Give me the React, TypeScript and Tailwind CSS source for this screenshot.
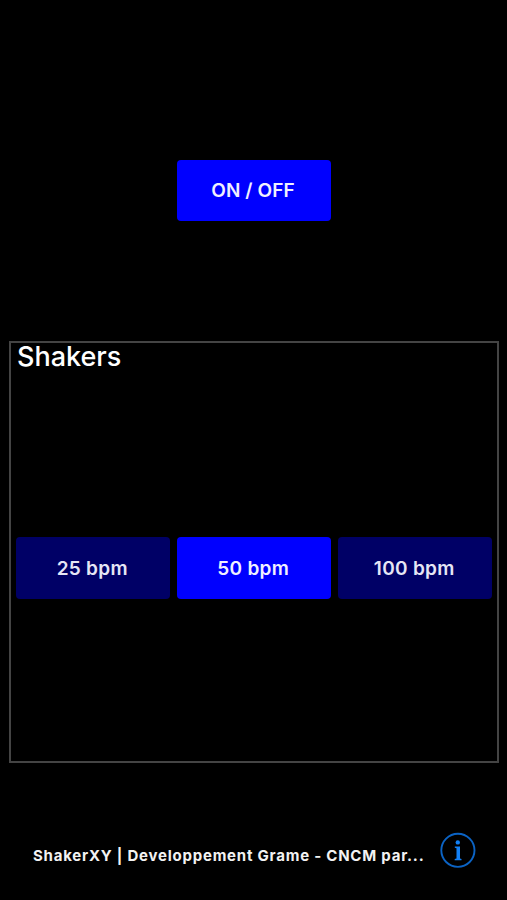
type PadProps = { label: string; active?: boolean; className?: string };

function Pad({ label, active = false, className = "" }: PadProps) {
  return (
    <button
      className={`flex w-[153.5px] shrink-0 items-center justify-center rounded-[4px] text-[19px] font-semibold whitespace-nowrap ${
        active ? "bg-[#0000ff] text-[#f0f0ff]" : "bg-[#000066] text-[#e6e6f5]"
      } ${className}`}
    >
      {label}
    </button>
  );
}

function InfoIcon() {
  return (
    <svg width="36" height="36" viewBox="0 0 36 36" fill="none">
      <circle cx="17.9" cy="18.3" r="16.6" stroke="#0b63c4" strokeWidth="1.9" />
      <circle cx="17.8" cy="10.4" r="2.2" fill="#1280f5" />
      <path d="M14.8 14.5h5.2v12l1.5.4v1.3h-6.8v-1.3l1.8-.4V16.2l-1.7-.4z" fill="#1280f5" />
    </svg>
  );
}

export default function App() {
  return (
    <main className="flex h-[900px] w-[507px] flex-col overflow-hidden bg-black font-['Inter','Liberation_Sans',sans-serif] text-white">
      <div className="flex h-[341px] shrink-0 justify-center pt-[160px] pl-[1px]">
        <Pad label="ON / OFF" active className="h-[61px] pt-[2px] pr-[2px] tracking-[0.1px]" />
      </div>
      <section className="ml-[9px] flex h-[422px] w-[490px] shrink-0 flex-col border-2 border-[#444444] pl-[5px]">
        <h1 className="h-[194px] pl-px text-[27px] leading-[27px] font-medium">Shakers</h1>
        <div className="flex gap-[7.5px]">
          <Pad label="25 bpm" className="h-[61.5px] pt-[3px] pr-[1px] tracking-[0.3px]" />
          <Pad label="50 bpm" active className="h-[61.5px] pt-[3px] pr-[1px] tracking-[0.3px]" />
          <Pad label="100 bpm" className="h-[61.5px] pt-[3px] pr-[1px] tracking-[0.3px]" />
        </div>
      </section>
      <footer className="flex pt-[69px] pl-[33px]">
        <p className="w-[407px] shrink-0 pt-[14px] text-[15px] leading-[20px] font-bold tracking-[0.77px] whitespace-nowrap text-[#f2f2f2]">
          ShakerXY | Developpement Grame - CNCM par...
        </p>
        <button aria-label="Info">
          <InfoIcon />
        </button>
      </footer>
    </main>
  );
}
